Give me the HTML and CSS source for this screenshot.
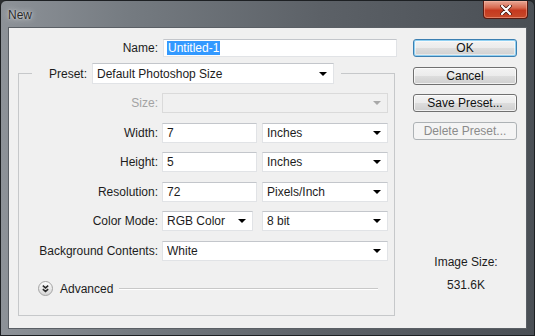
FILE: index.html
```html
<!DOCTYPE html>
<html>
<head>
<meta charset="utf-8">
<link rel="stylesheet" href="styles.css">
</head>
<body>
<div class="window">
  <div class="titlebar">
    <span class="title">New</span>
    <div class="close">
      <svg width="14" height="10" viewBox="0 0 14 10"><path d="M3 1 L11 9 M11 1 L3 9" stroke="#3a1008" stroke-width="3.6" stroke-linecap="round"/><path d="M3 1 L11 9 M11 1 L3 9" stroke="#ffffff" stroke-width="2.2" stroke-linecap="round"/></svg>
    </div>
  </div>
  <div class="client">
    <div class="left">
      <div class="name-row">
        <span class="lbl name-lbl">Name:</span>
        <div class="field name-field"><span class="sel">Untitled-1</span></div>
      </div>
      <fieldset class="group">
        <legend class="legend">
          <span class="preset-lbl">Preset:</span>
          <div class="field dd preset"><span>Default Photoshop Size</span><i class="arrow"></i></div>
        </legend>
        <div class="rows">
          <div class="row">
            <span class="lbl dim">Size:</span>
            <div class="fields"><div class="field dd off w-full"><span></span><i class="arrow grey"></i></div></div>
          </div>
          <div class="row">
            <span class="lbl">Width:</span>
            <div class="fields"><div class="field w-num">7</div><div class="field dd w-unit"><span>Inches</span><i class="arrow"></i></div></div>
          </div>
          <div class="row">
            <span class="lbl">Height:</span>
            <div class="fields"><div class="field w-num">5</div><div class="field dd w-unit"><span>Inches</span><i class="arrow"></i></div></div>
          </div>
          <div class="row">
            <span class="lbl">Resolution:</span>
            <div class="fields"><div class="field w-num">72</div><div class="field dd w-unit"><span>Pixels/Inch</span><i class="arrow"></i></div></div>
          </div>
          <div class="row">
            <span class="lbl">Color Mode:</span>
            <div class="fields gap-wide"><div class="field dd w-mode"><span>RGB Color</span><i class="arrow"></i></div><div class="field dd w-unit"><span>8 bit</span><i class="arrow"></i></div></div>
          </div>
          <div class="row">
            <span class="lbl">Background Contents:</span>
            <div class="fields"><div class="field dd w-full"><span>White</span><i class="arrow"></i></div></div>
          </div>
        </div>
        <div class="advanced">
          <svg class="adv-icon" width="15" height="15" viewBox="0 0 15 15">
            <defs><linearGradient id="g" x1="0" y1="0" x2="0" y2="1"><stop offset="0" stop-color="#ffffff"/><stop offset="1" stop-color="#d4d4d4"/></linearGradient></defs>
            <circle cx="7.5" cy="7.5" r="7" fill="url(#g)" stroke="#a3a3a3"/>
            <path d="M4.8 4.6 L7.5 6.9 L10.2 4.6 M4.8 8.1 L7.5 10.4 L10.2 8.1" fill="none" stroke="#2a2a2a" stroke-width="1.5"/>
          </svg>
          <span class="adv-text">Advanced</span>
          <div class="adv-line"></div>
        </div>
      </fieldset>
    </div>
    <div class="right">
      <div class="btn default">OK</div>
      <div class="btn">Cancel</div>
      <div class="btn">Save Preset...</div>
      <div class="btn disabled">Delete Preset...</div>
      <div class="info">
        <div class="info-line">Image Size:</div>
        <div class="info-line value">531.6K</div>
      </div>
    </div>
  </div>
</div>
</body>
</html>
```

FILE: styles.css
```css
* { box-sizing: border-box; }
html, body { margin: 0; padding: 0; }
body {
  width: 535px;
  height: 336px;
  overflow: hidden;
  background: #2b2e31;
  font-family: "Liberation Sans", Arial, sans-serif;
  font-size: 12px;
  color: #1c1c1c;
}
.window {
  width: 535px;
  height: 336px;
  border: 1px solid #1d2023;
  border-radius: 6px 6px 0 0;
  background: linear-gradient(to right, #8d9298 0%, #747a80 25%, #5c6167 60%, #4a4f55 100%);
  display: flex;
  flex-direction: column;
}
.titlebar {
  height: 27px;
  display: flex;
  align-items: flex-start;
  padding-left: 7px;
}
.title {
  align-self: center;
  margin-top: 1px;
  font-size: 12px;
  color: #2a2a2a;
  text-shadow: 0 0 6px rgba(255,255,255,0.75), 0 0 2px rgba(255,255,255,0.6);
}
.close {
  margin-left: auto;
  margin-right: 6px;
  width: 45px;
  height: 18px;
  border: 1px solid #5a1a10;
  border-top: none;
  border-radius: 0 0 4px 4px;
  background: linear-gradient(to bottom, #e8a896 0%, #d7694f 40%, #c5391f 55%, #c84a2a 100%);
  box-shadow: inset 0 0 0 1px rgba(255,190,170,0.45);
  display: flex;
  align-items: center;
  justify-content: center;
}
.client {
  margin: 0 8px;
  height: 300px;
  background: #f0f0f0;
  box-shadow: 0 0 0 1px #5a5f65;
  display: flex;
  padding: 11px 0 0 9px;
  gap: 16px;
}
.left {
  width: 379px;
  display: flex;
  flex-direction: column;
}
.name-row {
  display: flex;
  align-items: center;
  gap: 5px;
  height: 18px;
}
.lbl {
  text-align: right;
  white-space: nowrap;
}
.name-lbl { width: 140px; }
.field {
  height: 20px;
  background: #ffffff;
  border: 1px solid #e1e3e6;
  border-top-color: #c3c6cb;
  display: flex;
  align-items: center;
  padding-left: 4px;
  white-space: nowrap;
}
.name-field {
  width: 234px;
  height: 18px;
  padding-left: 3px;
}
.sel {
  background: #3399ff;
  color: #ffffff;
  line-height: 14px;
  padding: 0 1px;
}
.group {
  margin: 6px 0 0 0;
  padding: 0 0 19px 0;
  width: 377px;
  border: 1px solid #c6c8ca;
  min-width: 0;
}
.legend {
  margin-left: 13px;
  padding: 0 7px 0 0;
  display: flex;
  align-items: center;
  gap: 5px;
}
.preset-lbl {
  padding-left: 17px;
  width: 55px;
  white-space: nowrap;
}
.dd span { flex: 1; overflow: hidden; }
.preset {
  width: 242px;
  height: 21px;
}
.arrow {
  width: 0;
  height: 0;
  border-left: 4px solid transparent;
  border-right: 4px solid transparent;
  border-top: 4px solid #000000;
  margin-right: 6px;
  margin-left: 4px;
}
.arrow.grey { border-top-color: #a8a8a8; }
.rows {
  margin-top: 9px;
  display: flex;
  flex-direction: column;
  gap: 9.5px;
}
.row {
  display: grid;
  grid-template-columns: 139px 1fr;
  column-gap: 4px;
  align-items: center;
  height: 20px;
}
.dim { color: #a3a3a3; }
.fields {
  display: flex;
  gap: 5px;
}
.fields.gap-wide { gap: 9px; }
.w-num { width: 95px; }
.w-unit { width: 126px; }
.w-mode { width: 91px; }
.w-full { width: 226px; }
.off {
  background: #f0f0f0;
  border-color: #dadada;
}
.advanced {
  margin-top: 20.5px;
  height: 15px;
  display: flex;
  align-items: center;
  padding-left: 19px;
  padding-right: 16px;
}
.adv-icon { flex: none; }
.adv-text { margin-left: 7px; }
.adv-line {
  flex: 1;
  margin-left: 6px;
  height: 2px;
  border-top: 1px solid #c8c8c8;
  border-bottom: 1px solid #ffffff;
}
.right {
  width: 104px;
  display: flex;
  flex-direction: column;
  gap: 9.5px;
}
.btn {
  height: 18px;
  border: 1px solid #707070;
  border-radius: 3px;
  background: linear-gradient(to bottom, #f3f3f3 0%, #ebebeb 50%, #dddddd 51%, #cfcfcf 100%);
  box-shadow: inset 0 0 0 1px rgba(255,255,255,0.7);
  display: flex;
  align-items: center;
  justify-content: center;
  color: #111;
}
.btn.default {
  border-color: #3c7fb1;
  box-shadow: inset 0 0 0 1px #8fd0f2, inset 0 0 0 2px rgba(255,255,255,0.5);
}
.btn.disabled {
  border-color: #adb2b5;
  background: #f4f4f4;
  box-shadow: none;
  color: #8b8b8b;
}
.info {
  margin-top: 106px;
  display: flex;
  flex-direction: column;
  align-items: center;
  gap: 9px;
  padding-left: 2px;
}
.info-line { line-height: 14px; }
```
